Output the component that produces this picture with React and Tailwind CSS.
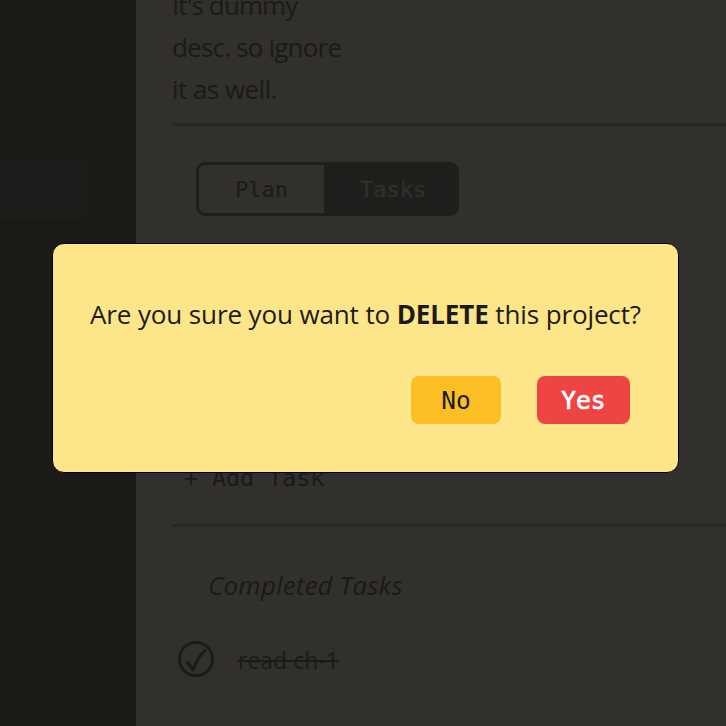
const sans = "font-['Open_Sans','Noto_Sans',sans-serif]";
const mono = "font-['DejaVu_Sans_Mono',monospace]";

function Sidebar() {
  return (
    <aside className="h-full w-[136px] shrink-0 bg-[#1b1a17] pt-[159px]">
      <div className="h-[60px] w-[88px] rounded-r-lg bg-[#1d1c1a]" />
    </aside>
  );
}

function ViewSwitch() {
  return (
    <div className={`${mono} ml-6 mt-9 flex h-[54px] w-[263px] overflow-hidden rounded-[9px] border-[3px] border-[#1f1e1c] text-[22px] leading-[50px]`}>
      <button className="w-[125px] pl-9 text-left">Plan</button>
      <button className="flex-1 bg-[#1f1e1c] pl-9 text-left text-[#302f2c] [-webkit-text-stroke:0.5px_#302f2c]">Tasks</button>
    </div>
  );
}

function Project() {
  return (
    <main className="flex h-full min-w-0 flex-1 flex-col bg-[#32302c] pl-9 text-[#1b1a18]">
      <p className="-mt-4 h-[139px] w-[190px] shrink-0 text-[26px] leading-[42px]">
        <span className="block tracking-[-0.9px]">It's dummy</span>
        <span className="block tracking-[-0.8px]">desc. so ignore</span>
        <span className="block tracking-[-0.55px]">it as well.</span>
      </p>
      <hr className="h-[3px] shrink-0 border-0 bg-[#292826]" />
      <ViewSwitch />
      <button className={`${mono} ml-3 mt-[244px] h-9 shrink-0 text-left text-[23.3px] leading-9`}>+ Add Task</button>
      <hr className="mt-[28px] h-[3px] shrink-0 border-0 bg-[#292826]" />
      <h2 className="ml-9 mt-[37px] h-[43px] shrink-0 text-[26px] italic leading-[42px] tracking-[0.1px]">Completed Tasks</h2>
      <div className="ml-[6px] mt-[34px] flex h-9 items-center">
        <svg className="h-9 w-9 shrink-0" viewBox="0 0 36 36" fill="none" stroke="currentColor" strokeLinecap="round" strokeLinejoin="round">
          <circle cx="18" cy="18" r="16.6" strokeWidth="2.8" />
          <path d="M9.5 21.5 L15 28.5 Q19 17 27 9.5" strokeWidth="3" />
        </svg>
        <span className="ml-6 pt-0.5 text-[23px] leading-9 line-through decoration-2">read ch-1</span>
      </div>
    </main>
  );
}

function DeleteDialog() {
  return (
    <div role="dialog" className="absolute left-[52px] top-[243px] flex h-[230px] w-[627px] flex-col rounded-xl border border-black bg-[#fde58a] pl-[37px] pt-[49px] text-[#1c1b19]">
      <p className="h-[43px] whitespace-nowrap text-[26px] leading-[42px] tracking-[-0.12px]">
        Are you sure you want to <b>DELETE</b> this project?
      </p>
      <div className={`${mono} mr-12 mt-10 flex justify-end gap-9 text-[24.5px] leading-[50px]`}>
        <button className="h-12 w-[90px] rounded-lg bg-[#fbbf24]">No</button>
        <button className="h-12 w-[93px] rounded-lg bg-[#ef4444] text-white [-webkit-text-stroke:0.7px_white]">Yes</button>
      </div>
    </div>
  );
}

export default function App() {
  return (
    <div className={`${sans} relative flex h-[726px] w-[726px] overflow-hidden bg-[#32302c]`}>
      <Sidebar />
      <Project />
      <DeleteDialog />
    </div>
  );
}
